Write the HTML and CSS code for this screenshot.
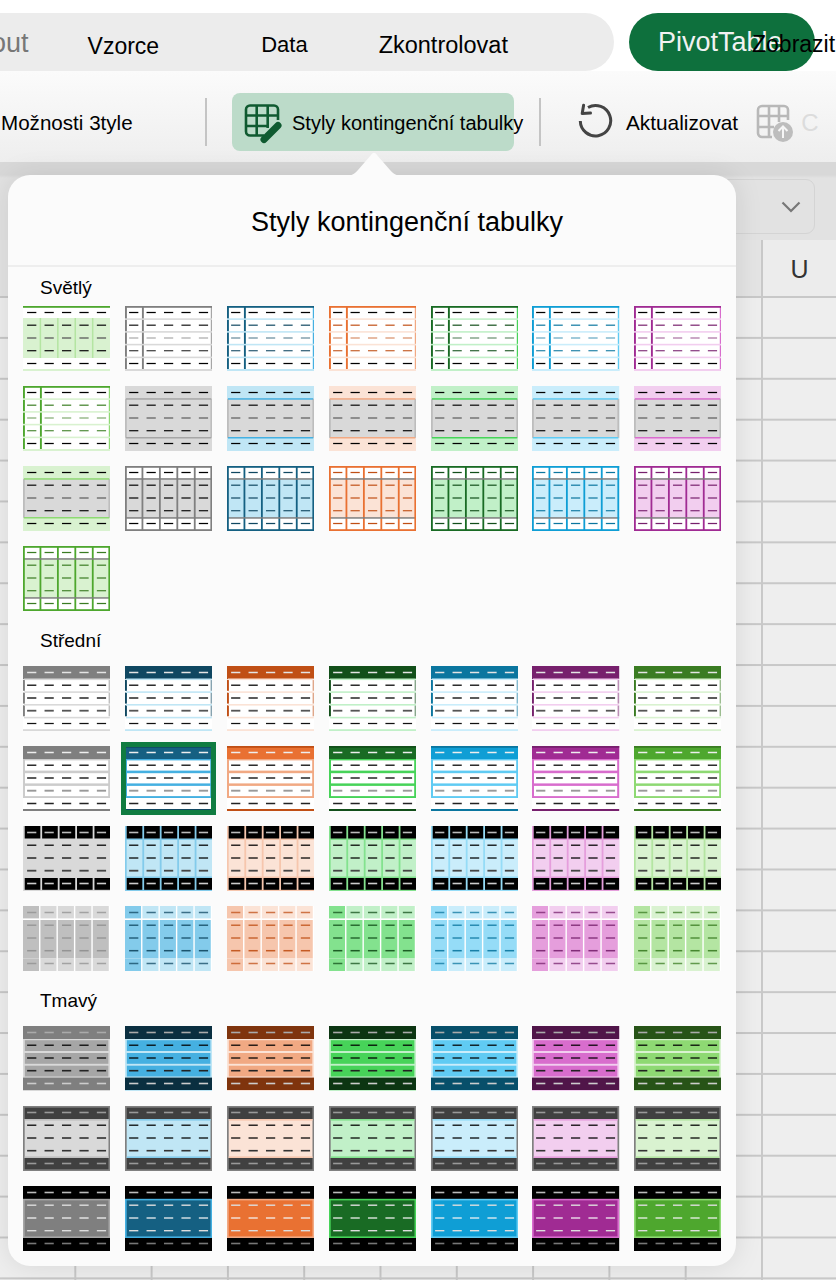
FILE: index.html
```html
<!DOCTYPE html>
<html lang="cs">
<head>
    <meta charset="UTF-8">
    <meta name="viewport" content="width=device-width, initial-scale=1.0">
    <title>Styly kontingenční tabulky</title>
    <link rel="stylesheet" href="styles.css">
</head>
<body>
    <div class="tab-bar">
        <div class="tabs">
            <span class="tab tab-faded">out</span>
            <span class="tab tab-vzorce">Vzorce</span>
            <span class="tab tab-data">Data</span>
            <span class="tab tab-review">Zkontrolovat</span>
        </div>
        <div class="tab-pivot">PivotTable</div>
        <span class="tab-view">Zobrazit</span>
    </div>

    <div class="ribbon">
        <span class="ribbon-text ribbon-options">Možnosti 3tyle</span>
        <span class="ribbon-sep"></span>
        <button class="ribbon-active" type="button">
            <svg class="icon-styles" width="40" height="42" viewBox="0 0 40 42" fill="none">
                <path d="M21 32.5H7a4 4 0 0 1-4-4V6.5a4 4 0 0 1 4-4h24a4 4 0 0 1 4 4V17" stroke="#0f5a30" stroke-width="2.6"/>
                <path d="M3 12.5h32M3 23h23M13.7 3v29M24.7 3v22" stroke="#0f5a30" stroke-width="2.6"/>
                <path d="M21 36.5l14-14" stroke="#0f5a30" stroke-width="7" stroke-linecap="round"/>
            </svg>
            <span class="ribbon-text">Styly kontingenční tabulky</span>
        </button>
        <span class="ribbon-sep sep-right"></span>
        <svg class="icon-refresh" width="36" height="36" viewBox="0 0 36 36" fill="none">
            <path d="M10 4.5A15.2 15.2 0 1 1 2.3 18" stroke="#444" stroke-width="3"/>
            <path d="M5.6 2.2L4.2 10.5L12.5 10" stroke="#444" stroke-width="3" stroke-linecap="round" stroke-linejoin="round"/>
        </svg>
        <span class="ribbon-text ribbon-refresh">Aktualizovat</span>
        <svg class="icon-change" width="38" height="38" viewBox="0 0 38 38" fill="none">
            <path d="M16 33H6a4 4 0 0 1-4-4V6a4 4 0 0 1 4-4h22a4 4 0 0 1 4 4v10" stroke="#b8b8b8" stroke-width="2.6"/>
            <path d="M2 12h30M2 23h16M13 2v31M23 2v16" stroke="#b8b8b8" stroke-width="2.6"/>
            <circle cx="27" cy="28" r="10" fill="#bdbdbd"/>
            <path d="M27 34V23M22.5 27l4.500-4.500l4.500 4.500" stroke="#f6f6f6" stroke-width="2"/>
        </svg>
        <span class="ribbon-text ribbon-disabled">C</span>
    </div>

    <div class="formula-bar">
        <div class="name-box">
            <svg width="20" height="12" viewBox="0 0 20 12" fill="none">
                <path d="M1.500 1.500L10 10l8.500-8.500" stroke="#777" stroke-width="2.200"/>
            </svg>
        </div>
    </div>
    <div class="column-header"><span class="column-u">U</span></div>
    <div class="cells"></div>

    <div class="popover">
        <svg class="popover-arrow" width="60" height="24" viewBox="0 0 60 24">
            <path d="M0 24C8 24 10 22 14 18L27 3C29 0 31 0 33 3L46 18C50 22 52 24 60 24Z" fill="#fbfbfb"/>
        </svg>
        <h1 class="popover-title">Styly kontingenční tabulky</h1>
        <div class="section-label label-first">Světlý</div>
        <div class="style-grid" id="light-grid"></div>
        <div class="section-label">Střední</div>
        <div class="style-grid" id="medium-grid"></div>
        <div class="section-label">Tmavý</div>
        <div class="style-grid" id="dark-grid"></div>
    </div>

    <script src="script.js"></script>
</body>
</html>
```
FILE: styles.css
```css
html, body {
    margin: 0;
    padding: 0;
}
body {
    position: relative;
    width: 836px;
    height: 1280px;
    overflow: hidden;
    font-family: "Liberation Sans", Arial, sans-serif;
    color: #000;
    background-color: #fff;
}

/* tabs */
.tab-bar {
    display: flex;
    height: 58px;
    padding-top: 13px;
    background-color: #fff;
}
.tabs {
    display: flex;
    align-items: center;
    width: 654px;
    margin-left: -40px;
    padding-top: 6px;
    box-sizing: border-box;
    border-radius: 29px;
    background-color: #ececec;
}
.tab {
    font-size: 22px;
    white-space: nowrap;
}
.tab-faded {
    margin-left: 31px;
    margin-bottom: 4px;
    font-size: 27px;
    color: #777;
}
.tab-vzorce {
    margin-left: 59px;
    font-size: 23px;
    padding-top: 2px;
}
.tab-data {
    margin-left: 102px;
}
.tab-review {
    margin-left: 71px;
    font-size: 23.500px;
}
.tab-pivot {
    width: 186px;
    margin-left: 15px;
    padding-left: 29px;
    box-sizing: border-box;
    border-radius: 29px;
    background-color: #0e703d;
    color: #f2f2f2;
    font-size: 27px;
    line-height: 58px;
}
.tab-view {
    position: absolute;
    left: 752px;
    top: 31px;
    font-size: 23px;
    white-space: nowrap;
}

/* ribbon */
.ribbon {
    display: flex;
    align-items: center;
    height: 91px;
    padding-top: 10px;
    box-sizing: border-box;
    background: linear-gradient(#fbfbfb, #eeeeee);
}
.ribbon-text {
    padding-top: 3px;
    font-size: 20px;
    white-space: nowrap;
}
.ribbon-options {
    width: 205px;
    padding-left: 1px;
    box-sizing: border-box;
    font-size: 20.600px;
}
.ribbon-sep {
    width: 2px;
    height: 48px;
    background-color: #c4c4c4;
}
.ribbon-active {
    display: flex;
    align-items: center;
    width: 282px;
    height: 58px;
    margin-left: 25px;
    padding: 0 0 0 11px;
    border: none;
    border-radius: 8px;
    background-color: #bcdbc9;
    font-family: inherit;
    color: #000;
}
.ribbon-active .ribbon-text {
    margin-left: 9px;
}
.icon-styles {
    flex: none;
    margin-top: 4px;
}
.sep-right {
    margin-left: 25px;
}
.icon-refresh {
    margin-left: 37px;
    margin-top: -2px;
}
.ribbon-refresh {
    margin-left: 12px;
    font-size: 20.800px;
}
.icon-change {
    flex: none;
    margin-left: 18px;
    margin-top: 2px;
}
.ribbon-disabled {
    margin-left: 7px;
    color: #dcdcdc;
    font-size: 24px;
}

/* sheet behind the popover */
.formula-bar {
    display: flex;
    justify-content: flex-end;
    align-items: flex-end;
    height: 78px;
    padding: 0 21px 6px 0;
    box-sizing: border-box;
    background: linear-gradient(#d8d8d8 0, #d8d8d8 13px, #e2e2e2 16px);
}
.name-box {
    display: flex;
    align-items: center;
    justify-content: flex-end;
    width: 300px;
    height: 55px;
    padding-right: 13px;
    box-sizing: border-box;
    border: 1px solid #d4d4d4;
    border-radius: 9px;
}
.column-header {
    display: flex;
    justify-content: flex-end;
    height: 56px;
    background-color: #e4e4e4;
}
.column-u {
    width: 75px;
    border-left: 2px solid #c8c8c8;
    font-size: 25px;
    line-height: 58px;
    text-align: center;
    color: #333;
    box-sizing: border-box;
    background-color: #ececec;
}
.cells {
    height: 984px;
    background-color: #eeeeee;
    background-image:
        linear-gradient(to right, transparent 74.300px, #c8c8c8 74.300px, #c8c8c8 76.300px, transparent 76.300px),
        linear-gradient(transparent 0, transparent 38.900px, #c8c8c8 38.900px, #c8c8c8 40.900px);
    background-size: 76.300px 40.900px;
    background-position: 0 2px;
}

/* popover */
.popover {
    position: absolute;
    left: 8px;
    top: 175px;
    width: 728px;
    height: 1091px;
    box-sizing: border-box;
    border-radius: 22px;
    background-color: #fbfbfb;
    box-shadow: 0 0 28px rgba(0, 0, 0, 0.10);
}
.popover-arrow {
    position: absolute;
    left: 336px;
    top: -23px;
}
.popover-title {
    height: 90px;
    margin: 0;
    padding-left: 70px;
    border-bottom: 2px solid #eeeeee;
    font-size: 27px;
    font-weight: normal;
    line-height: 94px;
    text-align: center;
}
.section-label {
    height: 24px;
    margin: 18px 0 13px 32px;
    font-size: 19px;
    line-height: 24px;
}
.label-first {
    margin-top: 9px;
    margin-bottom: 6px;
}
.style-grid {
    display: grid;
    grid-template-columns: repeat(7, 87.200px);
    grid-auto-rows: 65px;
    column-gap: 14.700px;
    row-gap: 15px;
    margin-left: 15px;
}
.thumb {
    position: relative;
}
.thumb svg {
    display: block;
    width: 100%;
    height: 100%;
}
.thumb.selected::after {
    content: "";
    position: absolute;
    top: -4px;
    left: -4px;
    right: -4px;
    bottom: -4px;
    border: 5px solid #107c41;
}
```
FILE: script.js
```js
// Office theme colours: main, 25% darker, 50% darker, 40/60/80% lighter
const palettes = {
    gray:   { m: '#7f7f7f', d25: '#7f7f7f', d50: '#7f7f7f', l40: '#a6a6a6', l60: '#bfbfbf', l80: '#d9d9d9', ink: '#000000', soft: '#8f8f8f' },
    blue:   { m: '#156082', d25: '#0f4761', d50: '#0a2f40', l40: '#45b0e1', l60: '#83cbeb', l80: '#c0e6f5', ink: '#0f4761', soft: '#0f4761' },
    orange: { m: '#e97132', d25: '#c04f15', d50: '#7f340d', l40: '#f1a983', l60: '#f6c6ad', l80: '#fbe3d6', ink: '#c04f15', soft: '#c04f15' },
    dkgreen:{ m: '#196b24', d25: '#124f1a', d50: '#0c3512', l40: '#47d359', l60: '#83e28e', l80: '#c1f0c8', ink: '#124f1a', soft: '#124f1a' },
    cyan:   { m: '#0f9ed5', d25: '#0b769f', d50: '#074f6a', l40: '#60cbf3', l60: '#95dcf7', l80: '#caedfb', ink: '#0b769f', soft: '#0b769f' },
    purple: { m: '#a02b93', d25: '#77206d', d50: '#501549', l40: '#d86dcd', l60: '#e59edc', l80: '#f2ceef', ink: '#77206d', soft: '#77206d' },
    green:  { m: '#4ea72e', d25: '#3a7c22', d50: '#275317', l40: '#8ed973', l60: '#b4e5a2', l80: '#d9f2d0', ink: '#3a7c22', soft: '#3a7c22' }
};
const order = ['gray', 'blue', 'orange', 'dkgreen', 'cyan', 'purple', 'green'];

const W = 87;
const H = 65;
const ROW_Y = [0, 13, 25.8, 38.5, 51.3, 64];
const ROW_MID = [6.5, 19.2, 32, 44.7, 57.5];
const COL = 17.4;

function rect(x, y, w, h, fill, opacity) {
    const op = opacity ? ` fill-opacity="${opacity}"` : '';
    return `<rect x="${x}" y="${y}" width="${w}" height="${h}" fill="${fill}"${op}/>`;
}

// five little dashes standing in for the cell text of one row
function dashes(row, color, opacity, thick) {
    const h = thick || 1.25;
    let out = '';
    for (let c = 0; c < 5; c++) {
        out += rect((8.7 + c * COL - 4.6).toFixed(1), (ROW_MID[row] - h / 2).toFixed(2), 9.2, h, color, opacity);
    }
    return out;
}

function vlines(color, width, from, height) {
    let out = '';
    for (let c = 1; c < 5; c++) {
        out += rect((c * COL - width / 2).toFixed(1), from, width, height, color);
    }
    return out;
}

const draw = {
    // banded rows, coloured top line
    bands(p) {
        return rect(0, 0, W, H, '#fff') + rect(0, 12, W, 40, p.l80) + vlines(p.l60, 1.5, 12, 40) +
            rect(0, 0, W, 1.8, p.m) + rect(0, 63, W, 2, p.l80) +
            dashes(0, '#000') + dashes(1, '#111') + dashes(2, '#555', 0.7, 1.8) + dashes(3, '#111') + dashes(4, '#000');
    },
    // first column with ruled rows
    firstColumn(p) {
        let out = rect(0, 0, W, H, '#fff') +
            rect(0, 0, 1.9, H, p.m) + rect(16.9, 0, 1.9, H, p.m) + rect(85.6, 0, 1.4, H, p.l40) + rect(0, 0, W, 1.8, p.m);
        for (let r = 1; r < 5; r++) {
            out += rect(0, ROW_Y[r] - 0.7, W, 1.6, p.l80);
        }
        return out + rect(0, 63, W, 2, p.l80) +
            dashes(0, '#000') + dashes(1, p.d25 === p.m ? '#111' : p.d25, 0.95) +
            dashes(2, p.d25 === p.m ? '#777' : p.d25, 0.45, 1.7) +
            dashes(3, p.d25 === p.m ? '#222' : p.d25, 0.85) + dashes(4, '#000');
    },
    // tinted header and footer around a gray block
    grayBlock(p) {
        return rect(0, 0, W, H, p.l80) + rect(0, 12.8, W, 39, '#d9d9d9') +
            rect(0, 12.8, 1.8, 39, '#bdbdbd') + rect(85.2, 12.8, 1.8, 39, '#bdbdbd') +
            rect(1, 12.2, 85, 1.5, p.l40) + rect(1, 51, 85, 1.5, p.l40) +
            dashes(0, '#000') + dashes(1, '#111') + dashes(2, '#777', 0.9, 1.7) + dashes(3, '#111') + dashes(4, '#000');
    },
    // boxed columns
    boxed(p) {
        const ink = p.ink;
        let out = rect(0, 0, W, H, '#fff') + rect(0, 13, W, 39, p.l80) + vlines(p.m, 1.8, 0, H) +
            rect(0, 12.2, W, 1.5, '#7f7f7f') + rect(0, 51.2, W, 1.5, '#7f7f7f');
        out += rect(0, 0, W, 1.8, p.m) + rect(0, 63.2, W, 1.8, p.m) + rect(0, 0, 1.8, H, p.m) + rect(85.2, 0, 1.8, H, p.m);
        return out + dashes(0, ink) + dashes(1, ink, 0.95) + dashes(2, ink, 0.8, 1.5) + dashes(3, ink, 0.9) + dashes(4, ink);
    },
    // dark header, open rows
    headerRuled(p) {
        let out = rect(0, 0, W, H, '#fff') + rect(0, 0, W, 13, p.d25);
        for (let r = 1; r < 4; r++) {
            out += rect(0, ROW_Y[r] + 0.8, 1.9, 11, p.d25) + rect(85.4, ROW_Y[r] + 0.8, 1.6, 11, p.d25, 0.5);
        }
        for (let r = 1; r < 5; r++) {
            out += rect(1, ROW_Y[r] - 0.5, 85.6, 1.6, p.l80);
        }
        return out + rect(0, 63.2, W, 1.8, p.l80) +
            dashes(0, '#e4e4e4', 0, 1.5) + dashes(1, '#000') + dashes(2, '#333', 0, 1.6) + dashes(3, '#555', 0, 1.8) + dashes(4, '#111');
    },
    // main colour header, thick ruled rows
    headerFramed(p) {
        const frame = p === palettes.gray ? '#cccccc' : p.l40;
        let out = rect(0, 0, W, 52, frame) + rect(0, 52, W, 13, '#fff') + rect(0, 0, W, 13, p.m) + rect(0, 0, W, 1.8, p.d25);
        for (let r = 1; r < 4; r++) {
            out += rect(2, ROW_Y[r] + 1.4, 83, 10.2, '#fff');
        }
        return out + rect(0, 63, W, 2, p.d25) +
            dashes(0, '#eeeeee', 0, 1.5) + dashes(1, '#000') + dashes(2, '#333', 0, 1.6) + dashes(3, '#999', 0, 1.9) + dashes(4, '#222', 0, 1.5);
    },
    // black header and footer cells over tinted columns
    blackCells(p) {
        let out = rect(0, 0, W, H, p === palettes.gray ? '#d9d9d9' : p.l60);
        for (let c = 0; c < 5; c++) {
            const x = (1.7 + c * COL).toFixed(1);
            out += rect(x, 0, 15.6, 12.5, '#000') + rect(x, 14, 15.6, 36.500, p.l80) + rect(x, 52, 15.6, 11.8, '#000');
        }
        return out + dashes(0, '#bbb', 0, 1.6) + dashes(1, '#000') + dashes(2, '#000') + dashes(3, '#444', 0, 1.8) + dashes(4, '#ccc', 0, 1.6);
    },
    // pale columns, first column stronger
    paleColumns(p) {
        let out = rect(0, 0, W, H, '#fff');
        for (let c = 0; c < 5; c++) {
            const x = (c * COL).toFixed(1);
            const first = c === 0;
            out += rect(x, 0, 16, 12.4, first ? p.l60 : p.l80) + rect(x, 14, 16, 38.500, p.l60) + rect(x, 52.5, 16, 12.500, first ? p.l60 : p.l80);
        }
        return out + dashes(0, p.soft, 0.75, 1.5) + dashes(1, p.soft, 0.95) + dashes(2, p.soft, 0.95) + dashes(3, p.soft, 0.9, 1.5) + dashes(4, p.soft, 0.75, 1.5);
    },
    // dark header and footer, strong bands
    darkBands(p) {
        let out = rect(0, 0, W, H, p.l80) + rect(0, 0, W, 13, p.d50) + rect(0, 51.6, W, 12.400, p.d50);
        for (let r = 1; r < 4; r++) {
            out += rect(1.8, ROW_Y[r] + 1.2, 83.4, 10.8, p.l40);
        }
        return out + dashes(0, '#aaa', 0, 1.6) + dashes(1, '#000') + dashes(2, '#000') + dashes(3, '#222', 0, 1.6) + dashes(4, '#ccc', 0, 1.6);
    },
    // charcoal header and footer, pale body
    charcoal(p) {
        return rect(0, 0, W, H, '#808080') + rect(1.7, 1.7, 83.6, 11.3, '#404040') + rect(1.7, 52, 83.6, 11.3, '#404040') +
            rect(1.7, 13, 83.6, 39, p.l80) + rect(1.7, 13, 83.6, 1.6, p.l60) + rect(1.7, 50.4, 83.6, 1.6, p.l60) +
            dashes(0, '#999', 0, 1.6) + dashes(1, '#000') + dashes(2, '#000') + dashes(3, '#333', 0, 1.6) + dashes(4, '#999', 0, 1.6);
    },
    // black header and footer, solid colour body
    solid(p) {
        const body = p.m;
        const frame = p === palettes.gray ? '#a6a6a6' : p.l40;
        return rect(0, 0, W, H, '#000') + rect(0, 12.8, W, 39.2, frame) + rect(1.7, 14.4, 83.6, 36, body) +
            dashes(0, '#bbb', 0, 1.6) + dashes(1, '#ddd', 0, 1.4) + dashes(2, '#f4f4f4') + dashes(3, '#ddd', 0, 1.4) + dashes(4, '#777', 0, 1.6);
    }
};

function fillGrid(id, items) {
    const grid = document.getElementById(id);
    let html = '';
    items.forEach(function(item) {
        const cls = item.selected ? 'thumb selected' : 'thumb';
        html += `<div class="${cls}"><svg viewBox="0 0 ${W} ${H}" preserveAspectRatio="none">${draw[item.kind](palettes[item.color])}</svg></div>`;
    });
    grid.innerHTML = html;
}

// a run of seven, one style per theme colour
function run(kind) {
    return order.map(function(color) {
        return { kind: kind, color: color };
    });
}

// the light styles: green closes each row, so it starts the next one
const lightRow = function(kind) {
    return run(kind).slice(0, 6);
};
const light = [{ kind: 'bands', color: 'green' }]
    .concat(lightRow('firstColumn'), [{ kind: 'firstColumn', color: 'green' }])
    .concat(lightRow('grayBlock'), [{ kind: 'grayBlock', color: 'green' }])
    .concat(lightRow('boxed'), [{ kind: 'boxed', color: 'green' }]);

const medium = run('headerRuled').concat(run('headerFramed'), run('blackCells'), run('paleColumns'));
medium[8].selected = true;

const dark = run('darkBands').concat(run('charcoal'), run('solid'));

fillGrid('light-grid', light);
fillGrid('medium-grid', medium);
fillGrid('dark-grid', dark);
```
